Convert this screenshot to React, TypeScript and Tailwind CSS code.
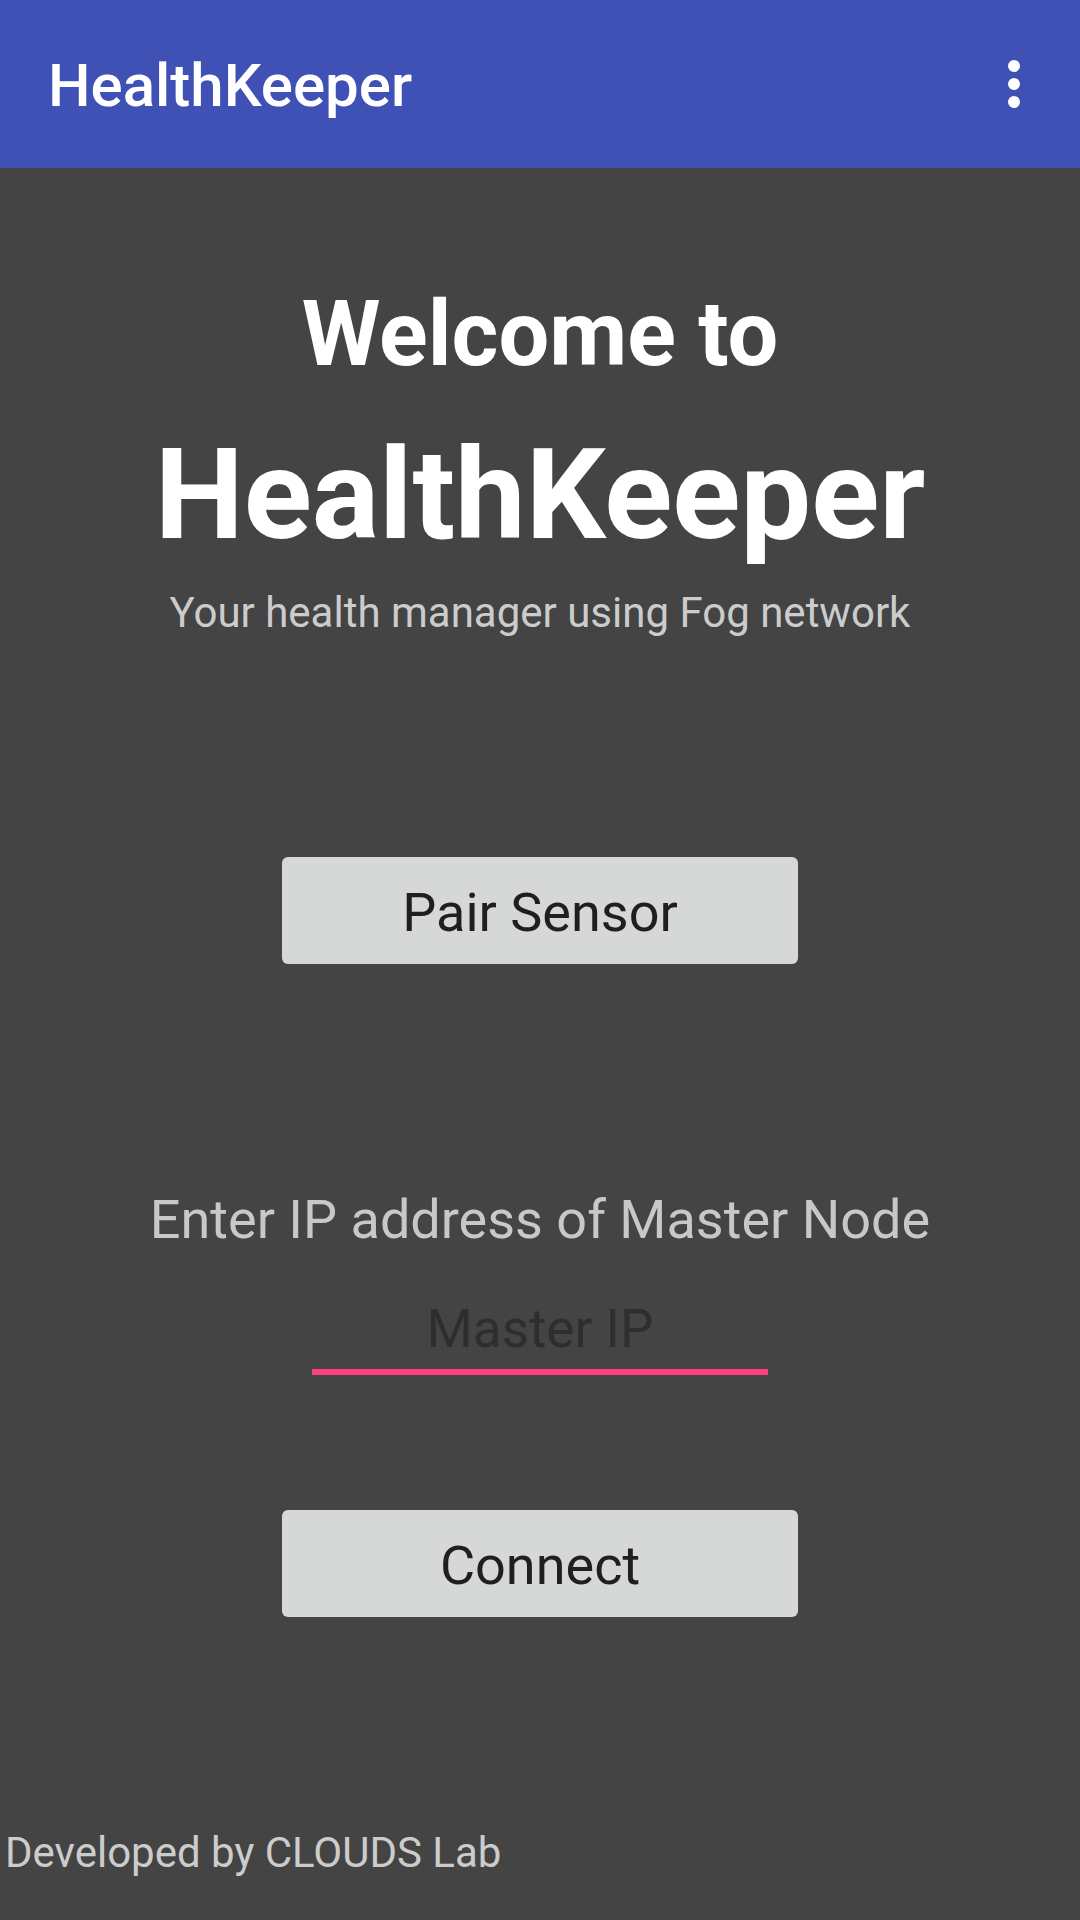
import React from 'react';

const OverflowIcon: React.FC = () => (
  <svg width="72" height="72" viewBox="0 0 72 72" fill="white">
    <circle cx="36" cy="18" r="6" />
    <circle cx="36" cy="36" r="6" />
    <circle cx="36" cy="54" r="6" />
  </svg>
);

const GreyButton: React.FC<{ label: string }> = ({ label }) => (
  <button className="w-[516px] h-[107px] bg-[#d6d7d7] rounded-[6px] flex items-center justify-center pt-[4px] text-[54px] leading-[54px] text-[#1f1f1f]">
    {label}
  </button>
);

export default function App() {
  return (
    <div className="w-[1080px] h-[1920px] bg-[#444444] flex flex-col font-['Roboto',sans-serif] overflow-hidden">
      <header className="h-[168px] shrink-0 bg-[#3f51b5] flex items-start justify-between pl-[48px] pr-[30px]">
        <h1 className="pt-[56px] text-[60px] leading-[60px] font-medium text-white">HealthKeeper</h1>
        <div className="pt-[48px]">
          <OverflowIcon />
        </div>
      </header>

      <main className="flex-1 flex flex-col items-center">
        <p className="mt-[122px] text-[90px] leading-[90px] font-bold text-white">Welcome to</p>
        <p className="mt-[52px] text-[126px] leading-[126px] font-bold text-white">HealthKeeper</p>
        <p className="mt-[34px] text-[42px] leading-[42px] text-[#cccccc]">Your health manager using Fog network</p>

        <div className="mt-[223px]">
          <GreyButton label="Pair Sensor" />
        </div>

        <p className="mt-[229px] text-[54px] leading-[54px] text-[#c8c8c8]">Enter IP address of Master Node</p>
        <div className="mt-[55px] w-[456px] flex flex-col items-center">
          <input
            placeholder="Master IP"
            className="w-full bg-transparent text-center text-[53px] leading-[53px] h-[53px] text-white placeholder:text-[#2e2e2e] outline-none"
          />
          <div className="mt-[14px] w-full h-[6px] bg-[#ff4081]" />
        </div>

        <div className="mt-[135px]">
          <GreyButton label="Connect" />
        </div>

        <p className="self-start mt-[215px] pl-[5px] text-[42px] leading-[42px] text-[#cccccc]">Developed by CLOUDS Lab</p>
      </main>
    </div>
  );
}
